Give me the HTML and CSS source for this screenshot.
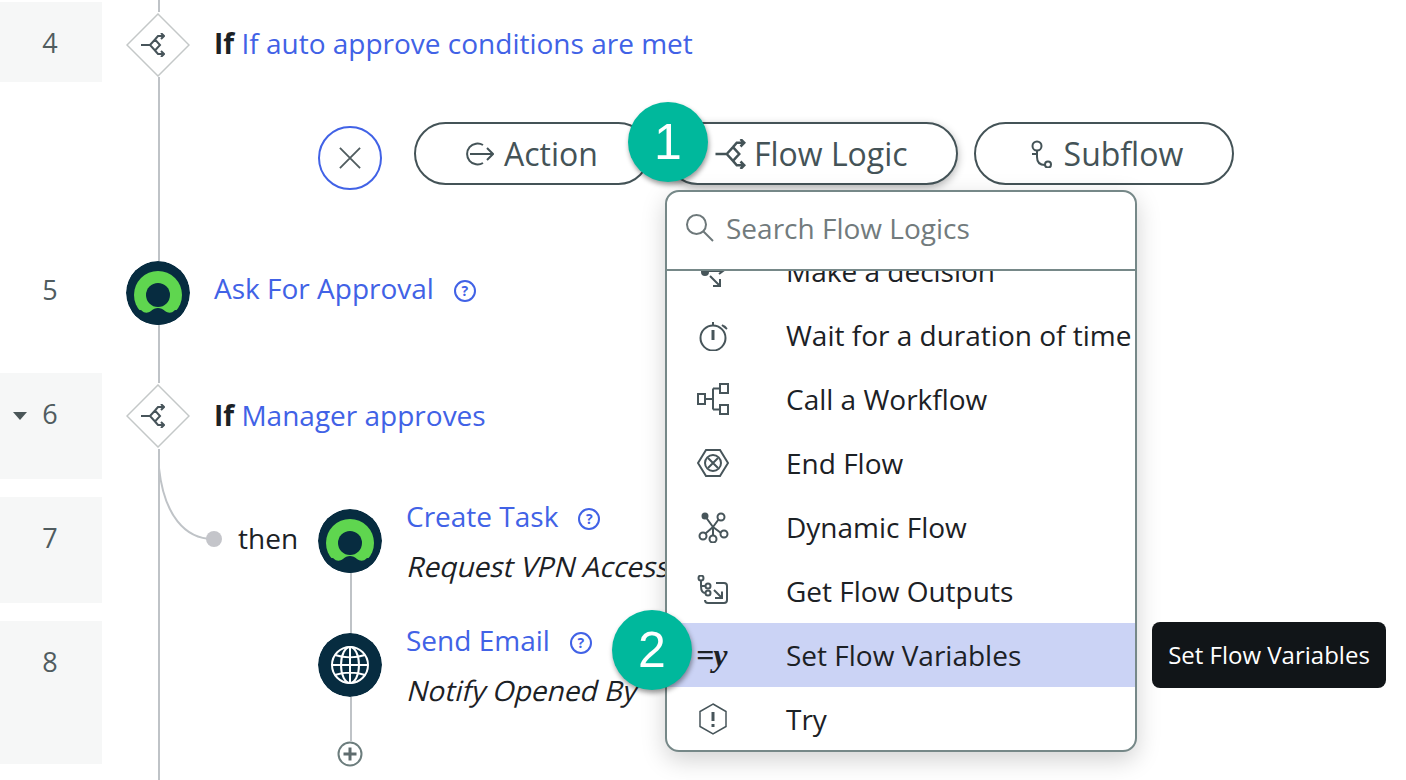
FILE: index.html
```html
<!DOCTYPE html>
<html lang="en">
<head>
    <meta charset="UTF-8">
    <title>Flow Designer</title>
    <link rel="stylesheet" href="styles.css">
</head>
<body>
    <div class="canvas">
        <!-- connectors between the steps -->
        <svg class="wires" width="1406" height="780" viewBox="0 0 1406 780">
            <path d="M159 0V12M159 77V261M159 325V383M159 449V780M351 573V634M351 697V741"/>
            <path d="M159 468C164 515 185 539 213 539"/>
        </svg>

        <!-- shared icons -->
        <svg class="defs" width="0" height="0">
            <symbol id="logic" viewBox="0 0 24 24">
                <path d="M0 12H9M9 12L14 6.500L19 12L14 17.500ZM14 6.500L17 3H23M20 0L23 3L20 6M14 17.500L17 21H23M20 18L23 21L20 24" fill="none" stroke="currentColor" stroke-width="2"/>
            </symbol>
            <symbol id="person" viewBox="0 0 64 64">
                <circle cx="32" cy="32" r="32" fill="#072c40"/>
                <circle cx="32" cy="34" r="24" fill="#5fd64f"/>
                <circle cx="32" cy="34" r="12" fill="#072c40"/>
                <path d="M6 50L15 49C19 53 22 52 25 50C29 46 35 46 39 50C42 52 45 53 49 49L58 50V64H6Z" fill="#072c40"/>
            </symbol>
        </svg>

        <div class="row row-short">
            <div class="num shaded">4</div>
            <div class="step">
                <svg class="diamond" viewBox="0 0 64 64"><path d="M32 1L63 32L32 63L1 32Z"/><use href="#logic" x="15" y="20" width="24" height="24"/></svg>
                <div class="title title-mid"><b>If</b> <a>If auto approve conditions are met</a></div>
            </div>
        </div>

        <div class="add-bar">
            <button class="close-btn">
                <svg width="22" height="22" viewBox="0 0 24 24"><path d="M1 1L23 23M23 1L1 23"/></svg>
            </button>
            <button class="pill">
                <svg width="28" height="24" viewBox="0 0 28 24"><path d="M17 3A10.500 10.500 0 1 0 17 21M4 12H27M21 6L27 12L21 18"/></svg>
                Action
            </button>
            <button class="pill pill-active">
                <svg class="pill-logic" width="31" height="30"><use href="#logic" width="31" height="30"/></svg>
                Flow Logic
            </button>
            <button class="pill pill-sub">
                <svg width="22" height="28" viewBox="0 0 22 28"><circle cx="7" cy="6" r="4.500"/><path d="M7 10.500V17C7 22 10 25 15 25M2 14H7"/><circle cx="18" cy="24.500" r="3"/></svg>
                Subflow
            </button>
        </div>

        <div class="row">
            <div class="num">5</div>
            <div class="step">
                <svg class="node" viewBox="0 0 64 64"><use href="#person"/></svg>
                <div class="title title-top"><a>Ask For Approval</a><span class="help">?</span></div>
            </div>
        </div>

        <div class="row">
            <div class="num shaded"><span class="caret"></span>6</div>
            <div class="step">
                <svg class="diamond" viewBox="0 0 64 64"><path d="M32 1L63 32L32 63L1 32Z"/><use href="#logic" x="15" y="20" width="24" height="24"/></svg>
                <div class="title title-low"><b>If</b> <a>Manager approves</a></div>
            </div>
        </div>

        <div class="row">
            <div class="num shaded">7</div>
            <div class="step step-child">
                <span class="then-dot"></span>
                <span class="then">then</span>
                <svg class="node" viewBox="0 0 64 64"><use href="#person"/></svg>
                <div class="title">
                    <div><a>Create Task</a><span class="help">?</span></div>
                    <div class="sub">Request VPN Access</div>
                </div>
            </div>
        </div>

        <div class="row row-last">
            <div class="num shaded">8</div>
            <div class="step step-nested">
                <div class="node-col">
                    <svg class="node" viewBox="0 0 64 64">
                        <circle cx="32" cy="32" r="32" fill="#072c40"/>
                        <g fill="none" stroke="#fff" stroke-width="2">
                            <circle cx="32" cy="32" r="18"/>
                            <ellipse cx="32" cy="32" rx="9" ry="18"/>
                            <path d="M32 14V50M14 32H50M17 22C26 25 38 25 47 22M17 42C26 39 38 39 47 42"/>
                        </g>
                    </svg>
                    <svg class="plus" width="26" height="26" viewBox="0 0 26 26"><circle cx="13" cy="13" r="11.500"/><path d="M13 6.500V19.500M6.500 13H19.500"/></svg>
                </div>
                <div class="title">
                    <div><a>Send Email</a><span class="help">?</span></div>
                    <div class="sub">Notify Opened By</div>
                </div>
            </div>
        </div>

        <!-- Flow logic dropdown -->
        <div class="menu">
            <div class="search">
                <svg width="30" height="30" viewBox="0 0 30 30"><circle cx="11.500" cy="11.500" r="9.500"/><path d="M18.500 18.500L28 28"/></svg>
                <span>Search Flow Logics</span>
            </div>
            <ul class="list">
                <li class="clipped">
                    <svg viewBox="0 0 32 32"><circle cx="8" cy="17" r="3" class="solid"/><path d="M11 16H26M13 21L23 31M23 24V31H16M22 13L26 16L22 19"/></svg>
                    Make a decision
                </li>
                <li>
                    <svg viewBox="0 0 32 32"><circle cx="16" cy="19" r="12.500"/><path d="M16 3V6M27 7L29 9M25 6L30 10"/><path d="M16 11V21" class="thick"/></svg>
                    Wait for a duration of time
                </li>
                <li>
                    <svg viewBox="0 0 32 32"><rect x="1" y="11" width="7" height="10"/><rect x="23" y="1" width="8" height="9"/><rect x="23" y="22" width="8" height="9"/><path d="M8 16H16M16 5.500H23M16 26.500H23M16 5.500V26.500"/></svg>
                    Call a Workflow
                </li>
                <li>
                    <svg viewBox="0 0 32 32"><path d="M9 3H23L31 16L23 29H9L1 16Z"/><circle cx="16" cy="16" r="8"/><path d="M11 11L21 21M21 11L11 21"/></svg>
                    End Flow
                </li>
                <li>
                    <svg viewBox="0 0 32 32"><circle cx="8" cy="5" r="2.500" class="solid"/><circle cx="24" cy="6" r="3.500"/><circle cx="6" cy="25" r="3.500"/><circle cx="16" cy="28" r="3.500"/><circle cx="27" cy="23" r="3.500"/><path d="M8 5L16 16M21.500 8.500L16 16M16 16V24.500M16 16L8.500 22.500M16 16L24 22"/></svg>
                    Dynamic Flow
                </li>
                <li>
                    <svg viewBox="0 0 32 32"><circle cx="4" cy="3" r="2.500"/><circle cx="11" cy="11" r="2.500"/><circle cx="11" cy="18" r="2.500"/><path d="M4 5.500V11C4 16 6 18 8.500 18M4 11H8.500M19 8H27C29 8 30 9 30 11V25C30 27 29 28 27 28H11C9.500 28 8 27 8 25M17 15L25 23M25 16.500V23H18"/></svg>
                    Get Flow Outputs
                </li>
                <li class="selected">
                    <span class="eq">=y</span>
                    Set Flow Variables
                </li>
                <li>
                    <svg class="thin" viewBox="0 0 32 32"><path d="M16 1L29 8.500V23.500L16 31L3 23.500V8.500Z"/><path d="M16 9V18M16 21V24" class="thick"/></svg>
                    Try
                </li>
            </ul>
        </div>

        <div class="tip">Set Flow Variables</div>
        <div class="badge badge-one">1</div>
        <div class="badge badge-two">2</div>
    </div>
</body>
</html>
```

FILE: styles.css
```css
body {
    margin: 0;
    background: #fff;
    font-family: "Open Sans", sans-serif;
    color: #1c2125;
}
.canvas {
    position: relative;
    width: 1406px;
    height: 780px;
    padding-top: 2px;
    box-sizing: border-box;
    overflow: hidden;
}
.wires {
    position: absolute;
    left: 0;
    top: 0;
}
.wires path {
    fill: none;
    stroke: #bfc3c7;
    stroke-width: 2;
}
.defs {
    position: absolute;
}
a {
    color: #4162e6;
}

/* rows */
.row {
    position: relative;
    display: flex;
    height: 106px;
    margin-bottom: 18px;
}
.row-short {
    height: 80px;
    margin-bottom: 0;
}
.row-last {
    height: 143px;
    margin-bottom: 0;
}
.num {
    position: relative;
    width: 100px;
    flex: none;
    margin-right: 2px;
    padding-top: 21px;
    box-sizing: border-box;
    text-align: center;
    font-size: 27px;
    line-height: 40px;
    color: #505c5f;
}
.shaded {
    width: 102px;
    margin-right: 0;
    padding-right: 2px;
    background: #f6f7f7;
}
.caret {
    position: absolute;
    left: 13px;
    top: 39px;
    border-left: 7px solid transparent;
    border-right: 7px solid transparent;
    border-top: 8px solid #4a5658;
}
.step {
    display: flex;
    align-items: flex-start;
    padding-left: 24px;
    font-size: 28px;
    line-height: 40px;
}
.step-child {
    padding-left: 104px;
}
.step-nested {
    padding-left: 216px;
}
.diamond {
    width: 64px;
    height: 64px;
    flex: none;
    margin-top: 11px;
    color: #47545a;
}
.diamond path {
    fill: #fff;
    stroke: #c4c8c8;
    stroke-width: 1.500;
}
.node {
    display: block;
    width: 64px;
    height: 64px;
    flex: none;
    margin-top: 12px;
    border-radius: 50%;
}
.title {
    margin: -1px 0 0 24px;
}
.title-mid {
    padding-top: 22px;
}
.title-low {
    padding-top: 23px;
}
.title-top {
    padding-top: 20px;
}
.sub {
    display: inline-block;
    margin-top: 10px;
    white-space: nowrap;
    transform: skewX(-14deg);
    transform-origin: 0 75%;
}
.help {
    display: inline-block;
    width: 22px;
    height: 22px;
    margin-left: 20px;
    box-sizing: border-box;
    border: 2px solid #4162e6;
    border-radius: 50%;
    color: #4162e6;
    font-size: 14px;
    font-weight: 700;
    line-height: 18px;
    text-align: center;
    vertical-align: 3px;
}

/* then branch */
.then-dot {
    width: 16px;
    height: 16px;
    flex: none;
    margin-top: 34px;
    border-radius: 50%;
    background: #c4c5ca;
}
.then {
    width: 59px;
    flex: none;
    margin: 21px 21px 0 16px;
}
.node-col {
    width: 64px;
    flex: none;
}
.plus {
    display: block;
    margin: 44px auto 0;
}
.plus circle,
.plus path {
    fill: none;
    stroke: #6c7d7d;
    stroke-width: 2;
}
.plus path {
    stroke: #5f6c6e;
    stroke-width: 3;
}

/* add bar */
.add-bar {
    display: flex;
    gap: 16px;
    height: 149px;
    margin-bottom: 18px;
    padding: 40px 0 0 318px;
    box-sizing: border-box;
}
.close-btn {
    width: 64px;
    height: 64px;
    margin: 4px 16px 0 0;
    padding: 0;
    border: 2px solid #4162e6;
    border-radius: 50%;
    background: #fff;
    display: flex;
    align-items: center;
    justify-content: center;
}
.close-btn path {
    fill: none;
    stroke: #505c5f;
    stroke-width: 2;
}
.pill {
    display: flex;
    align-items: center;
    gap: 10px;
    height: 63px;
    padding: 0 50px;
    border: 2px solid #445357;
    border-radius: 32px;
    background: #fff;
    color: #445357;
    font-family: "Open Sans", sans-serif;
    font-size: 32px;
}
.pill svg {
    fill: none;
    stroke: #445357;
    stroke-width: 2;
    flex: none;
}
.pill-active {
    gap: 8px;
    padding: 0 48px 0 47px;
    box-shadow: 0 3px 8px rgba(0, 0, 0, 0.3);
}
.pill-sub {
    gap: 12px;
    padding: 0 49px 0 54px;
}
.pill-logic {
    stroke: none;
}

/* dropdown */
.menu {
    position: absolute;
    left: 665px;
    top: 190px;
    width: 472px;
    height: 562px;
    box-sizing: border-box;
    border: 2px solid #768888;
    border-radius: 14px;
    background: #fff;
    box-shadow: 0 8px 24px rgba(0, 0, 0, 0.18);
    overflow: hidden;
}
.search {
    display: flex;
    align-items: center;
    gap: 11px;
    height: 79px;
    padding: 0 0 6px 18px;
    box-sizing: border-box;
    border-bottom: 2px solid #768888;
    color: #727b7d;
    font-size: 28px;
}
.search svg {
    fill: none;
    stroke: #6d787a;
    stroke-width: 2;
    flex: none;
}
.list {
    height: 479px;
    margin: 0;
    padding: 0;
    list-style: none;
    overflow: hidden;
}
.list li {
    display: flex;
    align-items: center;
    height: 64px;
    padding-left: 30px;
    font-size: 28px;
    white-space: nowrap;
}
.list li.clipped {
    margin-top: -32px;
}
.list li svg {
    width: 32px;
    height: 32px;
    margin-right: 57px;
    flex: none;
    fill: none;
    stroke: #47555a;
    stroke-width: 2;
}
.list li svg .solid {
    fill: #47555a;
}
.list li svg.thin {
    stroke-width: 1.500;
}
.list li svg .thick {
    stroke-width: 3;
}
.selected {
    background: #cbd3f5;
}
.eq {
    width: 32px;
    margin: 0 57px 0 -1px;
    padding-right: 1px;
    flex: none;
    font-family: "Liberation Serif", serif;
    font-size: 32px;
    font-style: italic;
    font-weight: 700;
    letter-spacing: -1px;
}

/* tooltip and callouts */
.tip {
    position: absolute;
    left: 1152px;
    top: 622px;
    width: 234px;
    height: 66px;
    border-radius: 8px;
    background: #111518;
    color: #fff;
    font-size: 24px;
    line-height: 66px;
    text-align: center;
}
.badge {
    position: absolute;
    width: 80px;
    height: 80px;
    border-radius: 50%;
    background: #00b89c;
    box-shadow: 1px 3px 5px rgba(0, 0, 0, 0.4);
    color: #fff;
    font-family: "Liberation Sans", sans-serif;
    font-size: 50px;
    line-height: 80px;
    text-align: center;
}
.badge-one {
    left: 628px;
    top: 102px;
}
.badge-two {
    left: 612px;
    top: 610px;
}
```
